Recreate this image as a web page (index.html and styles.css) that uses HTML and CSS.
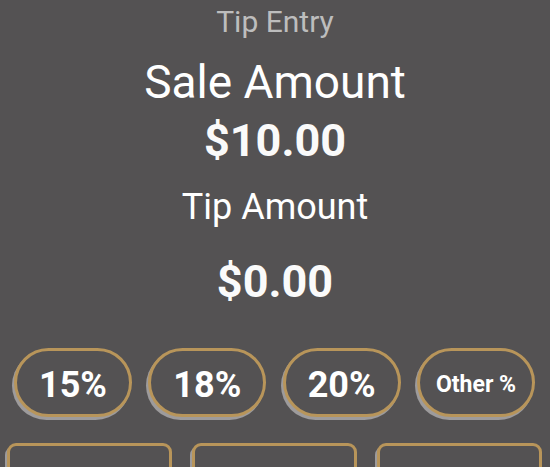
FILE: index.html
```html
<!DOCTYPE html>
<html lang="en">
<head>
  <meta charset="UTF-8">
  <meta name="viewport" content="width=device-width, initial-scale=1.0">
  <title>Tip Entry</title>
  <link rel="stylesheet" href="styles.css">
</head>
<body>
  <div class="screen">
    <div class="title">Tip Entry</div>
    <div class="label sale-label">Sale Amount</div>
    <div class="amount sale-amount">$10.00</div>
    <div class="label tip-label">Tip Amount</div>
    <div class="amount tip-amount">$0.00</div>

    <div class="pills">
      <button class="pill">15%</button>
      <button class="pill">18%</button>
      <button class="pill">20%</button>
      <button class="pill pill-other">Other %</button>
    </div>

    <div class="keys">
      <button class="key"></button>
      <button class="key"></button>
      <button class="key"></button>
    </div>
  </div>
</body>
</html>
```

FILE: styles.css
```css
body {
  margin: 0;
  background-color: #545253;
  font-family: Roboto, "Liberation Sans", sans-serif;
  color: #ffffff;
  overflow: hidden;
}

.screen {
  display: flex;
  flex-direction: column;
  align-items: center;
  height: 467px;
  padding-top: 2px;
  box-sizing: border-box;
  overflow: hidden;
}

.title {
  font-size: 30px;
  line-height: 40px;
  color: #bdbdbd;
}

.label {
  font-weight: 400;
}

.sale-label {
  font-size: 46px;
  line-height: 54px;
  margin-top: 13px;
}

.amount {
  font-size: 45px;
  line-height: 52px;
  font-weight: 700;
  color: #fafafa;
}

.sale-amount {
  margin-top: 6px;
}

.tip-label {
  font-size: 36px;
  line-height: 44px;
  margin-top: 18px;
}

.tip-amount {
  margin-top: 27px;
}

/* tip percentage buttons */
.pills {
  align-self: stretch;
  display: flex;
  justify-content: space-between;
  padding: 0 15px 0 14px;
  margin-top: 40px;
}

.pill {
  width: 118px;
  height: 69px;
  border: 3px solid #b8955a;
  border-radius: 35px;
  background-color: #545253;
  box-shadow: -2px 3px 0 #9d9b9c;
  color: #ffffff;
  font-family: Roboto, "Liberation Sans", sans-serif;
  font-size: 36px;
  font-weight: 700;
  padding: 5px 0 0;
}

.pill-other {
  font-size: 23px;
  padding-top: 3px;
}

/* keypad row (cut off at the bottom) */
.keys {
  align-self: stretch;
  display: flex;
  gap: 20px;
  padding: 0 8px 0 7px;
  margin-top: 26px;
}

.key {
  flex: 1;
  height: 70px;
  border: 3px solid #b8955a;
  border-radius: 9px;
  background-color: #545253;
  box-shadow: -2px 3px 0 #9d9b9c;
}
```
